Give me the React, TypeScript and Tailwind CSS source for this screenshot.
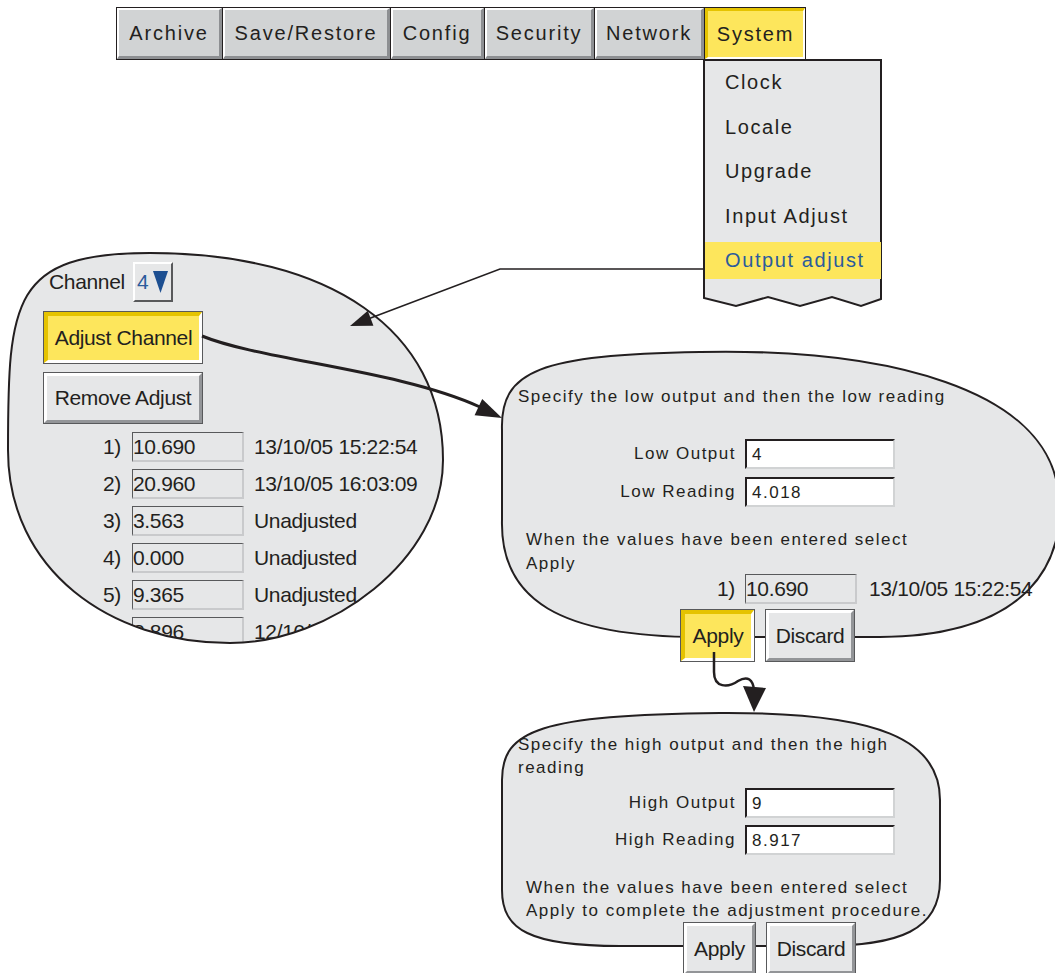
import React from "react";

function Tab({ label, w, active }: { label: string; w: string; active?: boolean }) {
  return (
    <div className={`${w} h-[53px] shrink-0 border border-[#231f20]`}>
      <div
        className={
          active
            ? "h-full flex items-center justify-center bg-[#fde65c] border-t-[3px] border-l-[3px] border-r-2 border-b-2 border-t-[#e5c300] border-l-[#e5c300] border-r-white border-b-white text-[20px] tracking-[1.8px]"
            : "h-full flex items-center justify-center bg-[#d1d3d4] border-t-2 border-l-2 border-r-[3px] border-b-[3px] border-t-white border-l-white border-r-[#8d8f92] border-b-[#8d8f92] text-[20px] tracking-[1.8px]"
        }
      >
        {label}
      </div>
    </div>
  );
}

function RaisedBtn({ w, h, children }: { w: string; h: string; children: React.ReactNode }) {
  return (
    <div className={`${w} ${h} shrink-0 border border-[#58595b]`}>
      <div className="h-full flex items-center justify-center bg-[#e6e7e8] border-t-[3px] border-l-[3px] border-r-[3px] border-b-[3px] border-t-white border-l-white border-r-[#939598] border-b-[#939598] text-[21px] tracking-[-0.35px]">
        {children}
      </div>
    </div>
  );
}

function PressedBtn({ w, h, children }: { w: string; h: string; children: React.ReactNode }) {
  return (
    <div className={`${w} ${h} shrink-0 border border-[#58595b]`}>
      <div className="h-full flex items-center justify-center bg-[#fde65c] border-t-4 border-l-4 border-r-[3px] border-b-[3px] border-t-[#e5c300] border-l-[#e5c300] border-r-white border-b-white text-[21px] tracking-[-0.35px]">
        {children}
      </div>
    </div>
  );
}

function ValueBox({ children }: { children: React.ReactNode }) {
  return (
    <div className="w-[112px] h-[30px] shrink-0 flex items-center bg-[#e6e7e8] border-t border-l border-t-[#58595b] border-l-[#58595b] border-r-2 border-b-2 border-r-[#c9cacc] border-b-[#c9cacc] leading-none">
      {children}
    </div>
  );
}

function InputBox({ children }: { children: React.ReactNode }) {
  return (
    <div className="w-[150px] h-[30px] shrink-0 flex items-center pl-[5px] bg-white border-t-2 border-l-2 border-t-[#231f20] border-l-[#231f20] border-r-2 border-b-2 border-r-[#d1d3d4] border-b-[#d1d3d4] leading-none">
      {children}
    </div>
  );
}

const rows: [string, string, string][] = [
  ["1)", "10.690", "13/10/05 15:22:54"],
  ["2)", "20.960", "13/10/05 16:03:09"],
  ["3)", "3.563", "Unadjusted"],
  ["4)", "0.000", "Unadjusted"],
  ["5)", "9.365", "Unadjusted"],
  ["6)", "8.896", "12/10/05 11:40:12"],
];

const menuItems = ["Clock", "Locale", "Upgrade", "Input Adjust", "Output adjust"];

export default function App() {
  const leftPath =
    "M 150 8 C 330 8 443 85 443 215 C 443 315 330 398 230 398 C 110 398 8 325 8 205 C 8 55 12 8 150 8 Z";
  const rightPath =
    "M 7 85 C 5 25 45 10 205 7 C 395 3 550 45 563 145 C 573 215 535 291 385 292 L 205 292 C 65 292 5 255 7 175 Z";
  const bottomPath =
    "M 7 72 C 7 22 45 7 225 5 C 385 4 445 32 445 92 L 445 172 C 445 222 405 238 325 238 L 125 238 C 35 238 7 222 7 182 Z";

  return (
    <div className="relative w-[1055px] h-[973px] overflow-hidden bg-white text-[#231f20] font-['Liberation_Sans',Arial,sans-serif]">
      {/* Left bubble */}
      <div className="absolute left-0 top-[245px] w-[450px] h-[405px]">
        <svg className="absolute inset-0" width="450" height="405">
          <path d={leftPath} fill="#e6e7e8" />
        </svg>
        <div className="absolute inset-0 [clip-path:path('M_150_8_C_330_8_443_85_443_215_C_443_315_330_398_230_398_C_110_398_8_325_8_205_C_8_55_12_8_150_8_Z')]">
          <div className="flex flex-col pl-[43px] pt-[17px] text-[21px] tracking-[-0.35px]">
            <div className="flex items-center h-[40px]">
              <span className="ml-[6px] w-[84px]">Channel</span>
              <div className="w-[40px] h-[40px] flex items-center bg-[#e6e7e8] border-t-2 border-l-2 border-t-white border-l-white border-r-2 border-b-2 border-r-[#58595b] border-b-[#58595b]">
                <span className="ml-[2px] text-[#2b5b9c]">4</span>
                <svg className="ml-[5px]" width="15" height="22" viewBox="0 0 15 22">
                  <path d="M0 0 H15 L7.5 22 Z" fill="#1d4f91" />
                </svg>
              </div>
            </div>
            <div className="mt-[9px]">
              <PressedBtn w="w-[160px]" h="h-[53px]">Adjust Channel</PressedBtn>
            </div>
            <div className="mt-[8px]">
              <RaisedBtn w="w-[160px]" h="h-[52px]">Remove Adjust</RaisedBtn>
            </div>
            <div className="mt-[8px] flex flex-col gap-[7px]">
              {rows.map(([n, v, d]) => (
                <div key={n} className="flex items-center h-[30px]">
                  <span className="w-[78px] text-right">{n}</span>
                  <div className="ml-[11px]">
                    <ValueBox>{v}</ValueBox>
                  </div>
                  <span className="ml-[10px] whitespace-nowrap">{d}</span>
                </div>
              ))}
            </div>
          </div>
        </div>
        <svg className="absolute inset-0 pointer-events-none" width="450" height="405">
          <path d={leftPath} fill="none" stroke="#231f20" strokeWidth="2" />
        </svg>
      </div>

      {/* Right bubble */}
      <div className="absolute left-[495px] top-[345px] w-[580px] h-[320px]">
        <svg className="absolute inset-0" width="580" height="320">
          <path d={rightPath} fill="#e6e7e8" stroke="#231f20" strokeWidth="2" />
        </svg>
        <div className="relative flex flex-col pl-[23px] pt-[40px] text-[17px] tracking-[1.5px]">
          <p className="leading-[23px] whitespace-nowrap">Specify the low output and then the low reading</p>
          <div className="mt-[31px] flex items-center h-[30px]">
            <span className="w-[218px] text-right">Low Output</span>
            <div className="ml-[9px]">
              <InputBox>4</InputBox>
            </div>
          </div>
          <div className="mt-[8px] flex items-center h-[30px]">
            <span className="w-[218px] text-right">Low Reading</span>
            <div className="ml-[9px]">
              <InputBox>4.018</InputBox>
            </div>
          </div>
          <div className="mt-[21px] pl-[8px] leading-[24px]">
            <div>When the values have been entered select</div>
            <div>Apply</div>
          </div>
          <div className="mt-[-2px] flex items-center h-[30px] text-[21px] tracking-[-0.35px]">
            <span className="w-[217px] text-right">1)</span>
            <div className="ml-[10px]">
              <ValueBox>10.690</ValueBox>
            </div>
            <span className="ml-[12px] whitespace-nowrap">13/10/05 15:22:54</span>
          </div>
          <div className="mt-[5px] flex">
            <div className="ml-[162px]">
              <PressedBtn w="w-[75px]" h="h-[53px]">Apply</PressedBtn>
            </div>
            <div className="ml-[10px]">
              <RaisedBtn w="w-[90px]" h="h-[53px]">Discard</RaisedBtn>
            </div>
          </div>
        </div>
      </div>

      {/* Bottom bubble */}
      <div className="absolute left-[495px] top-[708px] w-[450px] h-[265px]">
        <svg className="absolute inset-0" width="450" height="265">
          <path d={bottomPath} fill="#e6e7e8" stroke="#231f20" strokeWidth="2" />
        </svg>
        <div className="relative flex flex-col pl-[23px] pt-[24.5px] text-[17px] tracking-[1.5px]">
          <p className="w-[420px] leading-[23px]">Specify the high output and then the high reading</p>
          <div className="mt-[9.5px] flex items-center h-[30px]">
            <span className="w-[218px] text-right">High Output</span>
            <div className="ml-[9px]">
              <InputBox>9</InputBox>
            </div>
          </div>
          <div className="mt-[7px] flex items-center h-[30px]">
            <span className="w-[218px] text-right">High Reading</span>
            <div className="ml-[9px]">
              <InputBox>8.917</InputBox>
            </div>
          </div>
          <div className="mt-[21px] pl-[8px] leading-[23px] whitespace-nowrap">
            <div>When the values have been entered select</div>
            <div>Apply to complete the adjustment procedure.</div>
          </div>
          <div className="flex">
            <div className="ml-[165px]">
              <RaisedBtn w="w-[73px]" h="h-[53px]">Apply</RaisedBtn>
            </div>
            <div className="ml-[10px]">
              <RaisedBtn w="w-[90px]" h="h-[53px]">Discard</RaisedBtn>
            </div>
          </div>
        </div>
      </div>

      {/* Dropdown */}
      <div className="absolute left-[703px] top-[59px] w-[180px] h-[250px]">
        <svg className="absolute inset-0" width="180" height="250">
          <path
            d="M1 1 L178 1 L178 240 L158 247 L129 238 L97 247 L65 238 L33 247 L1 239 Z"
            fill="#e6e7e8"
            stroke="#231f20"
            strokeWidth="2"
          />
        </svg>
        <div className="relative flex flex-col gap-[7.5px] pt-[4.5px] px-[2px] text-[20px] tracking-[1.6px]">
          {menuItems.map((m, i) => (
            <div
              key={m}
              className={
                i === 4
                  ? "h-[37px] flex items-center pl-[20px] bg-[#fde65c] text-[#2b5b9c]"
                  : "h-[37px] flex items-center pl-[20px]"
              }
            >
              {m}
            </div>
          ))}
        </div>
      </div>

      {/* Menu bar */}
      <div className="absolute left-[116px] top-[7px] flex">
        <Tab label="Archive" w="w-[107px]" />
        <div className="-ml-px">
          <Tab label="Save/Restore" w="w-[169px]" />
        </div>
        <div className="-ml-px">
          <Tab label="Config" w="w-[95px]" />
        </div>
        <div className="-ml-px">
          <Tab label="Security" w="w-[111px]" />
        </div>
        <div className="-ml-px">
          <Tab label="Network" w="w-[111px]" />
        </div>
        <div className="-ml-px">
          <Tab label="System" w="w-[102px]" active />
        </div>
      </div>

      {/* Connectors */}
      <svg className="absolute left-0 top-0 pointer-events-none" width="1055" height="973">
        <polyline points="704,269 500,269 368,319" fill="none" stroke="#231f20" strokeWidth="1.6" />
        <polygon points="350,326 373.4,325.7 367.8,310.7" fill="#231f20" />
        <path d="M 202 336 C 260 360 400 370 480 407" fill="none" stroke="#231f20" strokeWidth="3" />
        <polygon points="502,418 474.6,415.3 482.2,398.9" fill="#231f20" />
        <path
          d="M 714 652 L 714 672 C 714 688 728 688 738 681 C 748 675 753 680 754 690"
          fill="none"
          stroke="#231f20"
          strokeWidth="2.5"
        />
        <polygon points="743,686 766,688 754,712" fill="#231f20" />
      </svg>
    </div>
  );
}
